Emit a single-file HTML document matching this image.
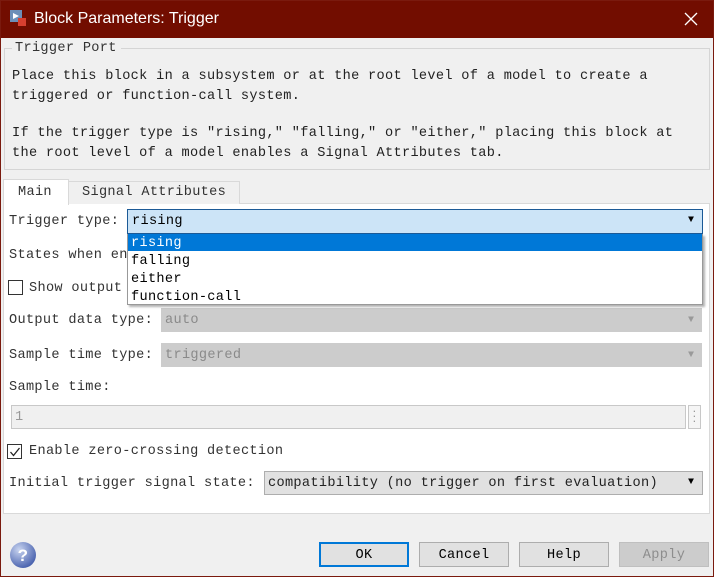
<!DOCTYPE html>
<html><head><style>
*{margin:0;padding:0;box-sizing:border-box}
body{width:714px;height:577px;overflow:hidden;background:#f0f0f0;font-family:"Liberation Mono","Noto Sans CJK SC",monospace;font-size:13.6px;letter-spacing:0.32px;color:#000;position:relative}
.a{position:absolute;white-space:nowrap;line-height:25px}
.win{position:absolute;left:0;top:0;width:714px;height:577px;border:1px solid #7a1a0e}
.title{position:absolute;left:0;top:0;width:714px;height:38px;background:#720d00;color:#fff;font-family:"Liberation Sans",sans-serif;font-size:16px;letter-spacing:0}
.cb{position:absolute;background:#fff;border:1px solid #333;width:15px;height:15px}
.btn{position:absolute;top:542px;width:90px;height:25px;background:#e1e1e1;border:1px solid #adadad;text-align:center;line-height:25px}
.dd{position:absolute;font-size:10px;line-height:10px}
</style></head><body>
<div class="title">
<svg style="position:absolute;left:10px;top:10px" width="17" height="17"><rect x="0" y="0" width="12" height="12" fill="#6c8fb8"/><polygon points="3,3 9,6 3,9" fill="#fff"/><rect x="8" y="8" width="8" height="8" fill="#d84030"/></svg>
<div class="a" style="left:34px;top:9px;line-height:20px">Block Parameters: Trigger</div>
<svg style="position:absolute;left:684px;top:12px" width="14" height="14"><path d="M1 1L13 13M13 1L1 13" stroke="#fff" stroke-width="1.3"/></svg>
</div>
<div style="position:absolute;left:4px;top:48px;width:706px;height:122px;border:1px solid #d5d5d5"></div>
<div class="a" style="left:12px;top:39px;background:#f0f0f0;padding:0 4px 0 3px;line-height:20px;color:#333">Trigger Port</div>
<div class="a" style="left:12px;top:64px;color:#222">Place this block in a subsystem or at the root level of a model to create a</div>
<div class="a" style="left:12px;top:84px;color:#222">triggered or function-call system.</div>
<div class="a" style="left:12px;top:121px;color:#222">If the trigger type is "rising," "falling," or "either," placing this block at</div>
<div class="a" style="left:12px;top:141px;color:#222">the root level of a model enables a Signal Attributes tab.</div>
<div style="position:absolute;left:3px;top:203px;width:707px;height:311px;background:#fff;border:1px solid #d9d9d9"></div>
<div style="position:absolute;left:3px;top:179px;width:66px;height:26px;background:#fff;border:1px solid #d9d9d9;border-bottom:none"></div>
<div class="a" style="left:18px;top:180px;color:#333">Main</div>
<div style="position:absolute;left:68px;top:181px;width:172px;height:23px;background:#f0f0f0;border:1px solid #d9d9d9;border-bottom:none"></div>
<div class="a" style="left:82px;top:180px;color:#333">Signal Attributes</div>
<div class="a" style="left:9px;top:209px;color:#333">Trigger type:</div>
<div style="position:absolute;left:127px;top:209px;width:576px;height:25px;background:#cce4f7;border:1px solid #1c5a96"></div>
<div class="a" style="left:132px;top:209px">rising</div>
<div class="dd" style="left:688px;top:216px">▼</div>
<div class="a" style="left:9px;top:243px;color:#333">States when en</div>
<div class="cb" style="left:8px;top:280px"></div>
<div class="a" style="left:29px;top:276px;color:#333">Show output</div>
<div class="a" style="left:9px;top:308px;color:#333">Output data type:</div>
<div style="position:absolute;left:161px;top:308px;width:541px;height:24px;background:#cccccc"></div>
<div class="a" style="left:165px;top:308px;color:#8a8a8a">auto</div>
<div class="dd" style="left:688px;top:316px;color:#999">▼</div>
<div class="a" style="left:9px;top:343px;color:#333">Sample time type:</div>
<div style="position:absolute;left:161px;top:343px;width:541px;height:24px;background:#cccccc"></div>
<div class="a" style="left:165px;top:343px;color:#8a8a8a">triggered</div>
<div class="dd" style="left:688px;top:351px;color:#999">▼</div>
<div class="a" style="left:9px;top:375px;color:#333">Sample time:</div>
<div style="position:absolute;left:11px;top:405px;width:675px;height:24px;background:#f0f0f0;border:1px solid #c8c8c8"></div>
<div class="a" style="left:15px;top:405px;color:#999">1</div>
<div style="position:absolute;left:688px;top:405px;width:13px;height:24px;background:#f5f5f5;border:1px solid #c8c8c8;color:#888;font-size:9px;line-height:5px;text-align:center;padding-top:4px">·<br>·<br>·</div>
<div class="cb" style="left:7px;top:444px"></div>
<svg style="position:absolute;left:9px;top:446px" width="12" height="12"><path d="M1.5 6L4.5 9.5L10.5 2" stroke="#222" stroke-width="1.3" fill="none"/></svg>
<div class="a" style="left:29px;top:439px;color:#333">Enable zero-crossing detection</div>
<div class="a" style="left:9px;top:471px;color:#333">Initial trigger signal state:</div>
<div style="position:absolute;left:264px;top:471px;width:439px;height:24px;background:#e1e1e1;border:1px solid #adadad"></div>
<div class="a" style="left:268px;top:471px;color:#222">compatibility (no trigger on first evaluation)</div>
<div class="dd" style="left:688px;top:478px">▼</div>
<div style="position:absolute;left:127px;top:234px;width:576px;height:71px;background:#fff;border:1px solid #999;box-shadow:2px 2px 2px rgba(0,0,0,.3)"></div>
<div style="position:absolute;left:128px;top:234px;width:574px;height:17px;background:#0078d7"></div>
<div class="a" style="left:131px;top:231px;color:#fff">rising</div>
<div class="a" style="left:131px;top:249px">falling</div>
<div class="a" style="left:131px;top:267px">either</div>
<div class="a" style="left:131px;top:285px">function-call</div>
<svg style="position:absolute;left:9px;top:541px" width="28" height="28"><defs><radialGradient id="g" cx=".35" cy=".3" r=".8"><stop offset="0" stop-color="#c8d4f0"/><stop offset="1" stop-color="#3d57a8"/></radialGradient></defs><circle cx="14" cy="14" r="13" fill="url(#g)"/><text x="14" y="20" text-anchor="middle" font-family="Liberation Sans" font-weight="bold" font-size="17" fill="#fff">?</text></svg>
<div class="btn" style="left:319px;border:2px solid #0078d7;line-height:23px">OK</div>
<div class="btn" style="left:419px">Cancel</div>
<div class="btn" style="left:519px">Help</div>
<div class="btn" style="left:619px;background:#ccc;border-color:#bfbfbf;color:#8d8d8d">Apply</div>
<div class="win"></div>
</body></html>
